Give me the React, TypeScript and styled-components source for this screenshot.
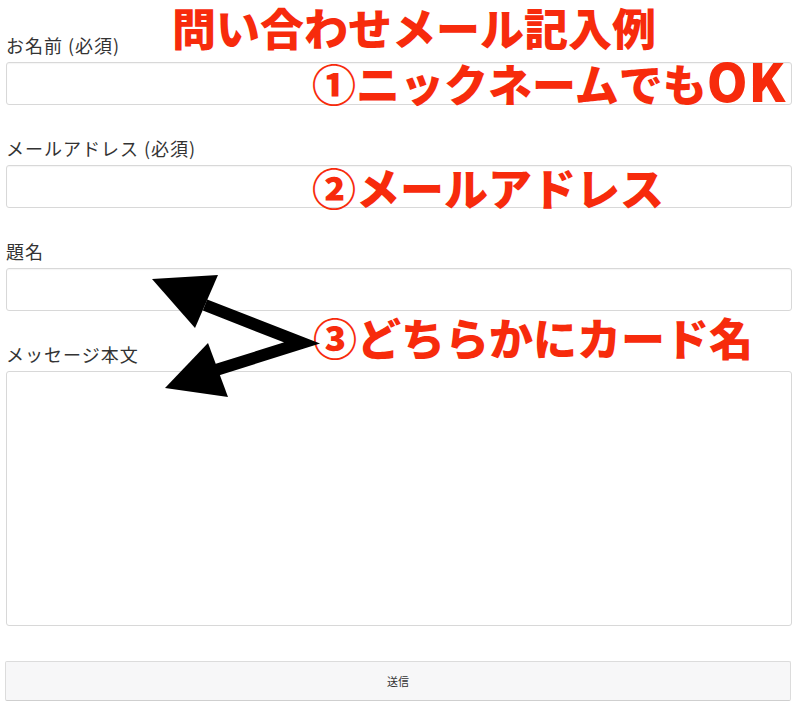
import React from 'react';
import styled, { createGlobalStyle } from 'styled-components';

const GlobalStyle = createGlobalStyle`
  html, body {
    margin: 0;
    padding: 0;
    background: #ffffff;
  }
  body {
    font-family: 'Noto Sans CJK JP', 'Noto Sans', sans-serif;
  }
`;

const Page = styled.div`
  position: relative;
  width: 800px;
  height: 727px;
  overflow: hidden;
`;

const Form = styled.form`
  display: flex;
  flex-direction: column;
  padding: 34px 8px 0 6px;
`;

const Field = styled.div<{ $gap?: number }>`
  display: flex;
  flex-direction: column;
  margin-bottom: ${(p) => p.$gap ?? 32}px;
`;

const Label = styled.label`
  font-size: 18px;
  line-height: 22px;
  height: 22px;
  color: #333333;
  margin-bottom: 6px;
  letter-spacing: 1px;
`;

const Input = styled.input`
  box-sizing: border-box;
  width: 100%;
  height: 43px;
  border: 1px solid #d8d8d8;
  border-radius: 3px;
  background: #ffffff;
  box-shadow: inset 0 1px 1px rgba(0, 0, 0, 0.04);
  outline: none;
`;

const TextArea = styled.textarea`
  box-sizing: border-box;
  width: 100%;
  height: 255px;
  border: 1px solid #d8d8d8;
  border-radius: 3px;
  background: #ffffff;
  resize: none;
  outline: none;
`;

const SubmitButton = styled.button`
  box-sizing: border-box;
  width: 100%;
  height: 40px;
  margin-left: -1px;
  border: 1px solid #dcdcdc;
  border-bottom-color: #cfcfcf;
  border-radius: 2px;
  background: #f7f7f8;
  color: #333333;
  font-family: 'Noto Sans CJK JP', sans-serif;
  font-size: 11px;
  cursor: pointer;
`;

const Note = styled.div<{ $top: number; $left: number }>`
  position: absolute;
  top: ${(p) => p.$top}px;
  left: ${(p) => p.$left}px;
  font-family: 'Noto Sans CJK JP', sans-serif;
  font-weight: 900;
  font-size: 44px;
  line-height: 48px;
  color: #f72b0c;
  white-space: nowrap;
  pointer-events: none;
`;

const Latin = styled.span`
  font-size: 52px;
  line-height: 0;
  letter-spacing: 1px;
`;

const Arrows = styled.svg`
  position: absolute;
  top: 0;
  left: 0;
  pointer-events: none;
`;

export default function App() {
  return (
    <Page>
      <GlobalStyle />
      <Form onSubmit={(e) => e.preventDefault()}>
        <Field>
          <Label>お名前 (必須)</Label>
          <Input type="text" />
        </Field>
        <Field>
          <Label>メールアドレス (必須)</Label>
          <Input type="email" />
        </Field>
        <Field>
          <Label>題名</Label>
          <Input type="text" />
        </Field>
        <Field $gap={35}>
          <Label>メッセージ本文</Label>
          <TextArea />
        </Field>
        <SubmitButton type="submit">送信</SubmitButton>
      </Form>

      <Note $top={3} $left={172}>問い合わせメール記入例</Note>
      <Note $top={59} $left={312}>
        ①ニックネームでも<Latin>OK</Latin>
      </Note>
      <Note $top={163} $left={312}>②メールアドレス</Note>
      <Note $top={313} $left={313}>③どちらかにカード名</Note>

      <Arrows width="800" height="727" viewBox="0 0 800 727">
        <polyline
          points="205,305 302,343 216,370"
          fill="none"
          stroke="#000"
          strokeWidth="12"
          strokeLinejoin="miter"
        />
        <polygon points="152,279 218,275 195,328" fill="#000" />
        <polygon points="165,388 208,343 228,397" fill="#000" />
      </Arrows>
    </Page>
  );
}
